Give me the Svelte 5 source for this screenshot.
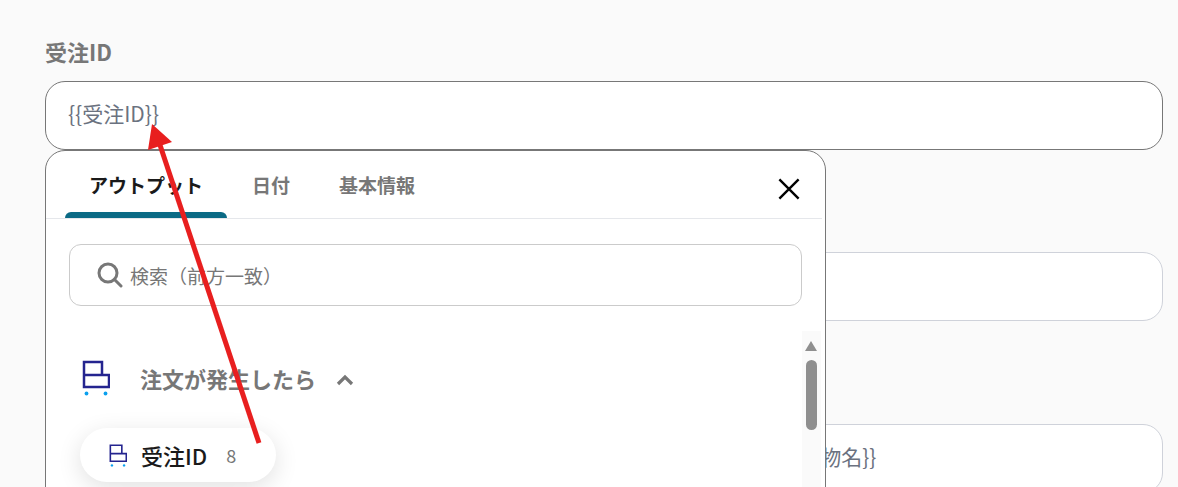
<script>
	const tabs = ['アウトプット', '日付', '基本情報'];
	const fields = [
		{ label: '受注ID', value: '{{受注ID}}', active: true },
		{ label: '受注日', value: '' },
		{ label: '商品名', value: '{{品物名}}', tail: true }
	];
</script>

{#snippet cartIcon(cls)}
	<svg class={cls} viewBox="0 0 28 36" fill="none">
		<path d="M2 2H20V15H2ZM2 15H27V27H2Z" stroke="#24248f" stroke-width="2.5" />
		<circle cx="4.5" cy="33.5" r="1.9" fill="#0aa0ee" />
		<circle cx="23.5" cy="33.5" r="1.9" fill="#0aa0ee" />
	</svg>
{/snippet}

<main>
	<div class="form">
		{#each fields as f}
			<div class="field">
				<label for={f.label}>{f.label}</label>
				<div class="input" class:active={f.active} class:tail={f.tail} id={f.label}>{f.value}</div>
			</div>
		{/each}
	</div>

	<section class="popup">
		<div class="tabs">
			{#each tabs as t, i}
				<div class="tab" class:current={i === 0}>{t}</div>
			{/each}
			<svg class="close" viewBox="0 0 24 24" fill="none">
				<path d="M1.5 1.5L22.5 22.5M22.5 1.5L1.5 22.5" stroke="#000" stroke-width="2.6" />
			</svg>
		</div>
		<div class="search">
			<svg viewBox="0 0 26 26" fill="none">
				<circle cx="11" cy="11" r="9" stroke="#777" stroke-width="3" />
				<path d="M17.5 17.5L24 24" stroke="#777" stroke-width="3" stroke-linecap="round" />
			</svg>
			<span>検索（前方一致）</span>
		</div>
		<div class="group">
			{@render cartIcon('icon')}
			<span class="name">注文が発生したら</span>
			<svg class="chev" viewBox="0 0 18 12" fill="none">
				<path d="M2 10L9 3L16 10" stroke="#777" stroke-width="3.2" />
			</svg>
		</div>
		<div class="scroll">
			<div class="up"></div>
			<div class="thumb"></div>
		</div>
	</section>

	<div class="chip">
		{@render cartIcon('small')}
		<b>受注ID</b>
		<span>8</span>
	</div>

	<svg class="arrow" viewBox="0 0 1178 487" fill="none">
		<path d="M259 443L159 142" stroke="#e81f1f" stroke-width="5" />
		<path d="M152 124L148 150L172 142Z" fill="#e81f1f" />
	</svg>
</main>

<style>
	:global(body) {
		margin: 0;
		background: #fafafa;
	}

	main {
		position: relative;
		height: 487px;
		overflow: hidden;
		font-family: "Noto Sans CJK JP", "Noto Sans", sans-serif;
		color: #6b7280;
	}

	.form {
		display: flex;
		flex-direction: column;
		gap: 61.4px;
		padding: 40px 15px 0 45px;
	}

	label {
		display: block;
		height: 28px;
		margin-bottom: 13px;
		font-size: 22px;
		font-weight: 700;
		line-height: 23px;
		color: #777;
	}

	.input {
		box-sizing: border-box;
		height: 69px;
		padding: 0 22px;
		background: #fff;
		border: 1px solid #cfd2da;
		border-radius: 20px;
		font-size: 21px;
		line-height: 62px;
		white-space: pre;
		overflow: hidden;
	}

	.input.active {
		border-color: #777;
	}

	.input.tail {
		padding-left: 739px;
	}

	.popup {
		position: absolute;
		top: 150px;
		left: 45px;
		box-sizing: border-box;
		width: 781px;
		height: 360px;
		background: #fff;
		border: 1px solid #777;
		border-radius: 20px;
	}

	.tabs {
		position: relative;
		display: flex;
		height: 67px;
		margin: 0 3px 0 0;
		padding-left: 19px;
		border-bottom: 1px solid #e5e7eb;
	}

	.tab {
		box-sizing: border-box;
		padding: 21px 24px 0 25px;
		font-size: 19px;
		font-weight: 700;
		line-height: 26px;
		color: #777;
	}

	.tab.current {
		position: relative;
		width: 162px;
		padding-left: 24px;
		padding-right: 0;
		color: #1a1a1a;
	}

	.tab.current::after {
		content: "";
		position: absolute;
		left: 0;
		right: 0;
		bottom: 0;
		height: 6px;
		background: #0b6a85;
		border-radius: 6px 6px 0 0;
	}

	.close {
		position: absolute;
		top: 27px;
		right: 21px;
		width: 24px;
		height: 22px;
	}

	.search {
		display: flex;
		align-items: center;
		gap: 7px;
		box-sizing: border-box;
		height: 62px;
		margin: 25px 23px 0 23px;
		padding-left: 27px;
		border: 1px solid #cbcbcb;
		border-radius: 12px;
		font-size: 19px;
		color: #777;
	}

	.search svg {
		width: 26px;
		height: 26px;
	}

	.group {
		display: flex;
		align-items: center;
		margin: 52px 0 0 36px;
		height: 40px;
	}

	.icon {
		width: 28px;
		height: 36px;
	}

	.name {
		margin-left: 30px;
		font-size: 22px;
		font-weight: 700;
		color: #777;
	}

	.chev {
		width: 18px;
		height: 12px;
		margin-left: 20px;
		margin-top: 3px;
	}

	.scroll {
		position: absolute;
		top: 180px;
		right: 4px;
		bottom: 0;
		width: 19px;
		background: #fafafa;
	}

	.up {
		width: 0;
		margin: 10px 0 0 3px;
		border: 6.5px solid transparent;
		border-top: 0;
		border-bottom: 10px solid #8f8f8f;
	}

	.thumb {
		width: 11px;
		height: 70px;
		margin: 9px 0 0 4px;
		background: #8f8f8f;
		border-radius: 6px;
	}

	.chip {
		position: absolute;
		top: 428px;
		left: 80px;
		display: flex;
		align-items: center;
		box-sizing: border-box;
		width: 196px;
		height: 54px;
		padding-left: 29px;
		background: #fff;
		border-radius: 27px;
		box-shadow: 0 6px 24px rgba(0, 0, 0, 0.12);
	}

	.small {
		width: 18px;
		height: 23px;
	}

	.chip b {
		margin-left: 14px;
		font-size: 22px;
		font-weight: 500;
		color: #1a1a1a;
	}

	.chip span {
		margin-left: 19px;
		font-size: 18px;
		color: #777;
	}

	.arrow {
		position: absolute;
		top: 0;
		left: 0;
		width: 1178px;
		height: 487px;
		pointer-events: none;
	}
</style>
